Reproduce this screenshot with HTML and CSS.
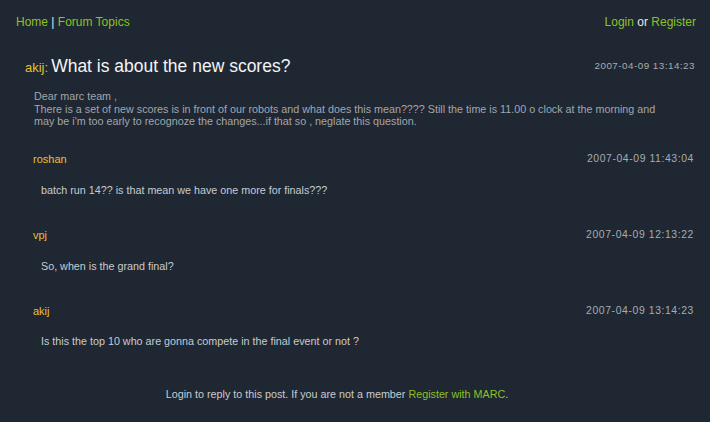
FILE: index.html
```html
<!DOCTYPE html>
<html>
<head>
<meta charset="utf-8">
<link rel="stylesheet" href="styles.css">
</head>
<body>
<div class="page">
  <div class="nav">
    <div class="nav-left"><a class="link">Home</a> <span class="sep">|</span> <a class="link">Forum Topics</a></div>
    <div class="nav-right"><a class="link">Login</a> <span class="or">or</span> <a class="link">Register</a></div>
  </div>

  <div class="topic-head">
    <div class="topic-title"><span class="author">akij:</span> <span class="title">What is about the new scores?</span></div>
    <div class="date date-topic">2007-04-09 13:14:23</div>
  </div>
  <div class="topic-body">Dear marc team ,<br>There is a set of new scores is in front of our robots and what does this mean???? Still the time is 11.00 o clock at the morning and may be i'm too early to recognoze the changes...if that so , neglate this question.</div>

  <div class="reply">
    <div class="reply-head"><span class="user">roshan</span><span class="date">2007-04-09 11:43:04</span></div>
    <div class="reply-body">batch run 14?? is that mean we have one more for finals???</div>
  </div>
  <div class="reply">
    <div class="reply-head"><span class="user">vpj</span><span class="date">2007-04-09 12:13:22</span></div>
    <div class="reply-body">So, when is the grand final?</div>
  </div>
  <div class="reply">
    <div class="reply-head"><span class="user">akij</span><span class="date">2007-04-09 13:14:23</span></div>
    <div class="reply-body">Is this the top 10 who are gonna compete in the final event or not ?</div>
  </div>

  <div class="footer">Login to reply to this post. If you are not a member <a class="link">Register with MARC</a>.</div>
</div>
</body>
</html>
```
FILE: styles.css
```css
html, body {
  margin: 0;
  padding: 0;
  background: #1f2733;
}
.page {
  width: 710px;
  height: 422px;
  background: #1f2733;
  font-family: "Liberation Sans", Arial, sans-serif;
  font-size: 10.75px;
  color: #c8ccd0;
}
.link {
  color: #8dc21f;
  text-decoration: none;
}
.nav {
  display: flex;
  justify-content: space-between;
  padding: 14px 14px 0 16px;
  font-size: 12px;
  line-height: 16px;
}
.sep, .or {
  color: #e6e8ea;
}
.topic-head {
  display: flex;
  justify-content: space-between;
  align-items: center;
  padding: 0 15px 0 25px;
  margin-top: 25px;
  height: 22px;
}
.author {
  color: #e8c030;
  font-size: 13px;
}
.title {
  color: #f2f4f6;
  font-size: 17.5px;
}
.date {
  color: #a8acb0;
  font-size: 10.4px;
  letter-spacing: 0.6px;
}
.date-topic {
  font-size: 9.8px;
  letter-spacing: 0.5px;
  margin-top: -2px;
}
.topic-body {
  width: 632px;
  padding-left: 34px;
  margin-top: 13px;
  line-height: 12.5px;
  color: #a2a6ab;
}
.reply {
  padding: 0 16px 0 33px;
}
.reply-head {
  display: flex;
  justify-content: space-between;
  align-items: center;
  height: 14px;
  margin-top: 24px;
}
.reply + .reply .reply-head {
  margin-top: 31px;
}
.user {
  color: #e8c030;
  font-size: 11px;
}
.reply-body {
  padding-left: 8px;
  margin-top: 17px;
  line-height: 14px;
}
.reply + .reply + .reply .reply-body {
  margin-top: 16px;
}
.footer {
  text-align: center;
  margin: 39px 36px 0 0;
  line-height: 14px;
}
```
